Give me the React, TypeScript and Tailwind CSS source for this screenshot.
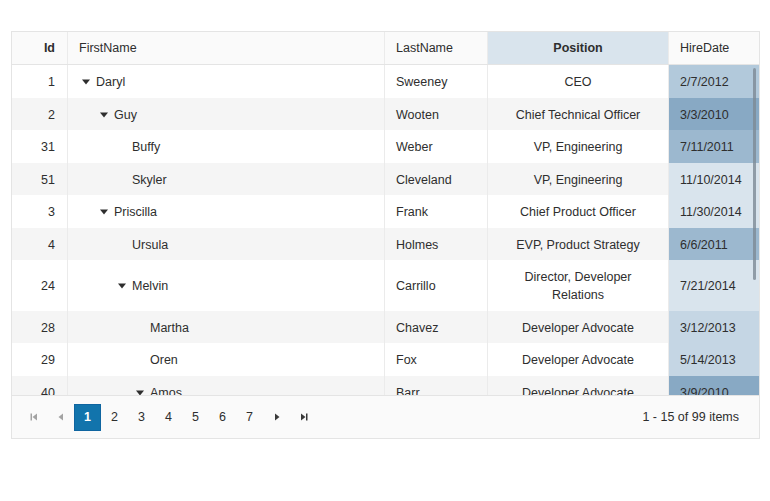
import React from 'react';

type Row = {
  id: number;
  first: string;
  level: number;
  expand?: boolean;
  last: string;
  position: string;
  hire: string;
  heat: string;
};

const rows: Row[] = [
  { id: 1, first: 'Daryl', level: 0, expand: true, last: 'Sweeney', position: 'CEO', hire: '2/7/2012', heat: 'bg-[#b2c9db]' },
  { id: 2, first: 'Guy', level: 1, expand: true, last: 'Wooten', position: 'Chief Technical Officer', hire: '3/3/2010', heat: 'bg-[#88a9c4]' },
  { id: 31, first: 'Buffy', level: 2, last: 'Weber', position: 'VP, Engineering', hire: '7/11/2011', heat: 'bg-[#9cb8cf]' },
  { id: 51, first: 'Skyler', level: 2, last: 'Cleveland', position: 'VP, Engineering', hire: '11/10/2014', heat: 'bg-[#d9e4ed]' },
  { id: 3, first: 'Priscilla', level: 1, expand: true, last: 'Frank', position: 'Chief Product Officer', hire: '11/30/2014', heat: 'bg-[#d9e4ed]' },
  { id: 4, first: 'Ursula', level: 2, last: 'Holmes', position: 'EVP, Product Strategy', hire: '6/6/2011', heat: 'bg-[#9cb8cf]' },
  { id: 24, first: 'Melvin', level: 2, expand: true, last: 'Carrillo', position: 'Director, Developer Relations', hire: '7/21/2014', heat: 'bg-[#d9e4ed]' },
  { id: 28, first: 'Martha', level: 3, last: 'Chavez', position: 'Developer Advocate', hire: '3/12/2013', heat: 'bg-[#c5d6e4]' },
  { id: 29, first: 'Oren', level: 3, last: 'Fox', position: 'Developer Advocate', hire: '5/14/2013', heat: 'bg-[#c5d6e4]' },
  { id: 40, first: 'Amos', level: 3, expand: true, last: 'Barr', position: 'Developer Advocate', hire: '3/9/2010', heat: 'bg-[#88a9c4]' },
  { id: 41, first: 'Nell', level: 3, last: 'Moss', position: 'Developer Advocate', hire: '4/2/2012', heat: 'bg-[#b2c9db]' },
];

const cols = 'grid grid-cols-[56px_317px_103px_181px_90px]';
const cellY = 'pt-[8px] pb-[6.5px]';

function CaretDown() {
  return (
    <svg width="8" height="6" viewBox="0 0 8 6">
      <path d="M0 0.5h8L4 5.5z" fill="#2e2e2e" />
    </svg>
  );
}

function PagerIcon({ kind, muted }: { kind: 'first' | 'prev' | 'next' | 'last'; muted?: boolean }) {
  const fill = muted ? '#a3a3a3' : '#3a3a3a';
  return (
    <svg width="10" height="10" viewBox="0 0 10 10">
      {kind === 'first' && (<><rect x="1.5" y="1.5" width="1.5" height="7" fill={fill} /><path d="M8 1.5v7L3.5 5z" fill={fill} /></>)}
      {kind === 'prev' && <path d="M7 1.5v7L2.5 5z" fill={fill} />}
      {kind === 'next' && <path d="M3 1.5v7L7.5 5z" fill={fill} />}
      {kind === 'last' && (<><path d="M2 1.5v7L6.5 5z" fill={fill} /><rect x="7" y="1.5" width="1.5" height="7" fill={fill} /></>)}
    </svg>
  );
}

export default function App() {
  return (
    <div className="min-h-screen bg-white pt-[31px] pl-[11px] text-[12.5px] text-[#2e2e2e]" style={{ fontFamily: '"Liberation Sans", Arial, sans-serif' }}>
      <div className="w-[749px] border border-[#e4e4e4] bg-white">
        {/* header */}
        <div className={`${cols} h-[33px] border-b border-[#e4e4e4] bg-[#fafafa] leading-[18px]`}>
          <div className="flex items-center justify-end border-r border-[#ebebeb] px-3 font-bold">Id</div>
          <div className="flex items-center border-r border-[#ebebeb] pl-[11px]">FirstName</div>
          <div className="flex items-center border-r border-[#ebebeb] pl-[11px]">LastName</div>
          <div className="flex items-center justify-center border-r border-[#ebebeb] bg-[#d9e4ed] font-bold">Position</div>
          <div className="flex items-center pl-[11px]">HireDate</div>
        </div>

        {/* body */}
        <div className="relative h-[330px] overflow-hidden">
          {rows.map((r, i) => (
            <div key={r.id} className={`${cols} leading-[18px] ${i % 2 === 1 ? 'bg-[#f5f5f5]' : 'bg-white'}`}>
              <div className={`flex items-center justify-end border-r border-[#ebebeb] px-3 ${cellY}`}>{r.id}</div>
              <div className={`flex items-center border-r border-[#ebebeb] pl-[10px] pr-3 ${cellY}`}>
                <span className="shrink-0" style={{ width: r.level * 18 }} />
                <span className="flex w-[18px] shrink-0 items-center pl-[4px]">{r.expand && <CaretDown />}</span>
                <span>{r.first}</span>
              </div>
              <div className={`flex items-center border-r border-[#ebebeb] pl-[11px] ${cellY}`}>{r.last}</div>
              <div className={`flex items-center justify-center border-r border-[#ebebeb] px-3 text-center ${cellY}`}>{r.position}</div>
              <div className={`flex items-center pl-[11px] ${cellY} ${r.heat}`}>{r.hire}</div>
            </div>
          ))}
          {/* overlay scrollbar thumb */}
          <div className="absolute right-[3px] top-[3px] h-[212px] w-[3px] rounded-full bg-[#7d8a95]/80" />
        </div>

        {/* pager */}
        <div className="flex h-[43px] items-center justify-between border-t border-[#e4e4e4] bg-[#fafafa] pl-[8px] pr-5">
          <div className="flex items-center">
            <span className="flex h-[27px] w-[27px] items-center justify-center"><PagerIcon kind="first" muted /></span>
            <span className="flex h-[27px] w-[27px] items-center justify-center"><PagerIcon kind="prev" muted /></span>
            <span className="flex h-[27px] w-[27px] items-center justify-center border border-[#0f65a0] bg-[#1274ac] font-bold text-white">1</span>
            {[2, 3, 4, 5, 6, 7].map((n) => (
              <span key={n} className="flex h-[27px] w-[27px] items-center justify-center">{n}</span>
            ))}
            <span className="flex h-[27px] w-[27px] items-center justify-center"><PagerIcon kind="next" /></span>
            <span className="flex h-[27px] w-[27px] items-center justify-center"><PagerIcon kind="last" /></span>
          </div>
          <span>1 - 15 of 99 items</span>
        </div>
      </div>
    </div>
  );
}
